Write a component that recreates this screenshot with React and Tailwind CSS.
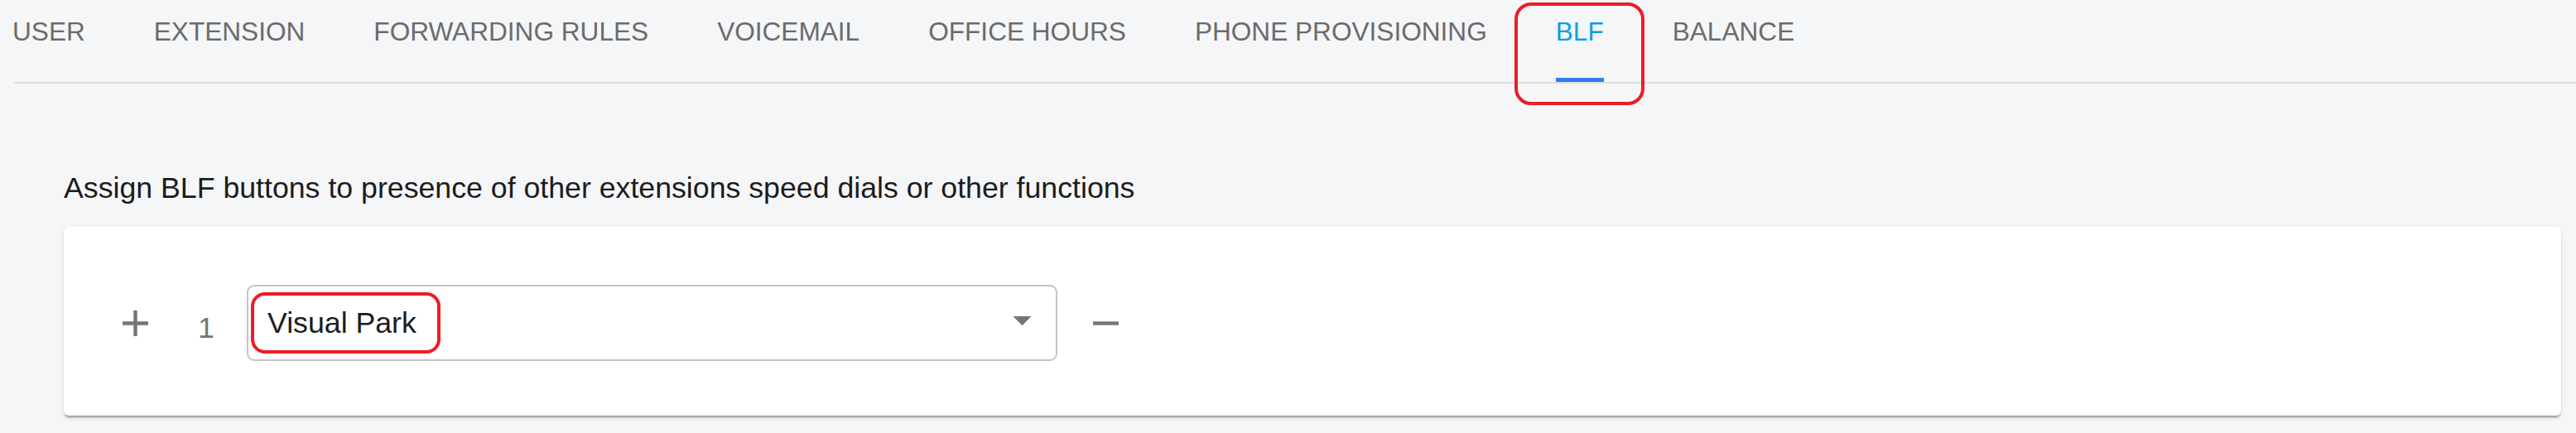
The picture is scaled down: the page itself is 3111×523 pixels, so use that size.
const TABS = ['USER', 'EXTENSION', 'FORWARDING RULES', 'VOICEMAIL', 'OFFICE HOURS', 'PHONE PROVISIONING', 'BLF', 'BALANCE'];

function Icon({ d, className }) {
  return (
    <svg viewBox="0 0 24 24" className={className} fill="currentColor">
      <path d={d} />
    </svg>
  );
}

export default function App() {
  return (
    <div className="relative w-[3111px] h-[523px] overflow-hidden bg-[#f5f6f8] font-['Liberation_Sans',Arial,sans-serif]">
      <div className="ml-[17px] border-b-2 border-[#dfe0e2]">
        <div className="flex gap-[83px] -ml-[2px]">
          {TABS.map((t) => (
            <div key={t} className="flex flex-col h-[99px] pt-[23px]">
              <span className={`text-[31.6px] leading-[31px] whitespace-nowrap ${t === 'BLF' ? 'text-[#0a9fe6]' : 'text-[#6b6b6b]'}`}>
                {t}
              </span>
              <div className="flex-1" />
              <div className={`h-[5px] ${t === 'BLF' ? 'bg-[#2f7df6]' : ''}`} />
            </div>
          ))}
        </div>
      </div>

      <div className="pl-[77px] pr-[18px]">
        <p className="mt-[108px] text-[35.7px] leading-[36px] text-[#1c1c1c] whitespace-nowrap">
          Assign BLF buttons to presence of other extensions speed dials or other functions
        </p>

        <div className="mt-[29px] h-[228px] bg-white rounded-[6px] pt-1 pl-[60px] flex items-center shadow-[0_4px_3px_-2px_rgba(0,0,0,0.28),0_2px_2px_0_rgba(0,0,0,0.12),0_2px_7px_0_rgba(0,0,0,0.08)]">
          <Icon d="M19 13h-6v6h-2v-6H5v-2h6V5h2v6h6v2z" className="w-[53px] h-[53px] text-[#757575]" />
          <span className="ml-[49px] mt-[12px] w-[20px] text-[35.7px] leading-[36px] text-[#777]">1</span>
          <div className="ml-[39px] w-[979px] h-[92px] border-2 border-[#c4c4c4] rounded-[9px] flex items-center pl-[23px] pr-[14px]">
            <span className="text-[35.7px] leading-[36px] text-[#1c1c1c]">Visual Park</span>
            <div className="flex-1" />
            <Icon d="M7 10l5 5 5-5z" className="w-[53px] h-[53px] mb-[7px] text-[#757575]" />
          </div>
          <Icon d="M19 13H5v-2h14v2z" className="ml-[32px] w-[53px] h-[53px] text-[#757575]" />
        </div>
      </div>

      <div className="absolute left-[1829px] top-[3px] w-[157px] h-[124px] border-[4px] border-[#ed1c24] rounded-[20px]" />
      <div className="absolute left-[303px] top-[353px] w-[229px] h-[74px] border-[4px] border-[#ed1c24] rounded-[17px]" />
    </div>
  );
}
